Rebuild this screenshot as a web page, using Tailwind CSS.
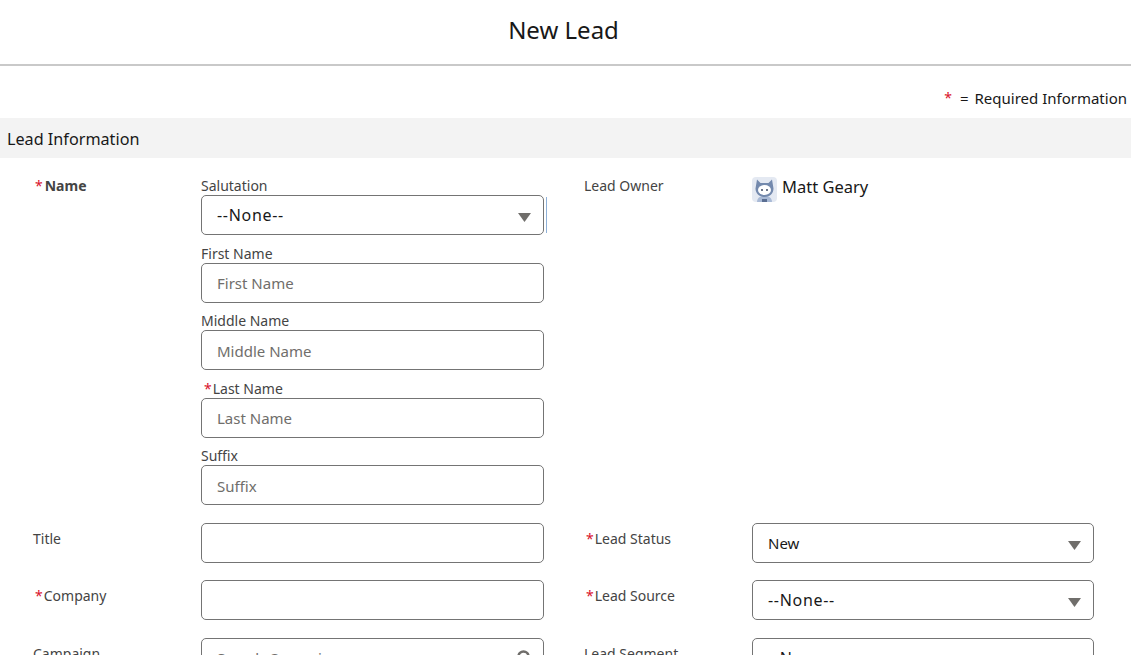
<!DOCTYPE html>
<html lang="en">
  <head>
    <meta charset="utf-8" />
    <title>New Lead</title>
    <script src="https://cdn.jsdelivr.net/npm/@tailwindcss/browser@4"></script>
  </head>
  <body class="bg-white font-['Noto_Sans',sans-serif] text-[#444444]">
    <div class="h-[655px] overflow-hidden">
      <!-- header -->
      <header class="h-[66px] border-b-2 border-[#c9c9c9] flex items-start justify-center pr-[4px]">
        <h1 class="text-[24px] leading-[60px] text-[#181818]">New Lead</h1>
      </header>
      <div class="h-[52px] flex items-end justify-end pr-[4px] pb-[9px] text-[15px] leading-[22px] text-[#181818]">
        <span class="text-[#d9122b] text-[14px] mr-[8px]">*</span><span class="mr-[6px]">=</span>Required Information
      </div>
      <div class="h-[40px] bg-[#f3f3f3] flex items-center pt-[2px] pl-[7px] text-[16.2px] text-[#181818]">Lead Information</div>

      <div class="pt-[9.5px]">
        <!-- name + owner -->
        <div class="flex mb-[18px]">
          <div class="w-[201px] pl-[35px] pt-[8px] text-[14px] leading-[19px] font-bold"><span class="text-[#d9122b] font-normal mr-[2px]">*</span>Name</div>
          <div class="w-[343px]">
            <div class="h-[27.5px] flex items-end text-[14px] leading-[19px]">Salutation</div>
            <div class="relative">
              <div class="h-[40px] border border-[#747474] rounded-[5px] flex items-center justify-between pl-[15px] pr-[12px] text-[16px] tracking-[0.7px] text-[#181818]">
                --None--
                <svg class="w-[13px] h-[9px] mt-[4px]" viewBox="0 0 13 9"><path d="M0 0h13L6.500 9z" fill="#706e6b"/></svg>
              </div>
              <span class="absolute -right-[3px] top-[2px] h-[36px] w-px bg-[#8fb1d8]"></span>
            </div>
            <div class="h-[27.5px] flex items-end text-[14px] leading-[19px]">First Name</div>
            <input class="block w-full h-[40px] border border-[#747474] rounded-[5px] px-[15px] text-[15px] placeholder:text-[#706e6b]" placeholder="First Name" />
            <div class="h-[27.5px] flex items-end text-[14px] leading-[19px]">Middle Name</div>
            <input class="block w-full h-[40px] border border-[#747474] rounded-[5px] pt-[2px] px-[15px] text-[15px] placeholder:text-[#706e6b]" placeholder="Middle Name" />
            <div class="h-[27.5px] flex items-end text-[14px] leading-[19px] pl-[3px]"><span class="text-[#d9122b] mr-[1px]">*</span>Last Name</div>
            <input class="block w-full h-[40px] border border-[#747474] rounded-[5px] px-[15px] text-[15px] placeholder:text-[#706e6b]" placeholder="Last Name" />
            <div class="h-[27.5px] flex items-end text-[14px] leading-[19px]">Suffix</div>
            <input class="block w-full h-[40px] border border-[#747474] rounded-[5px] pt-[2px] px-[15px] text-[15px] placeholder:text-[#706e6b]" placeholder="Suffix" />
          </div>
          <div class="w-[208px] pl-[40px] pt-[8px] text-[14px] leading-[19px]">Lead Owner</div>
          <div class="flex items-start gap-[5px] pt-[9.5px] text-[16.5px] leading-[20px] text-[#181818]">
            <svg class="w-[25px] h-[25px]" viewBox="0 0 25 25">
              <rect width="25" height="25" rx="4" fill="#e4e9f2"/>
              <path d="M5 25c0-4 3-6 7.500-6s7.500 2 7.500 6z" fill="#a9bad6"/>
              <path d="M5 2.500l3.500 3.500h8l3.500-3.500 1.500 9c0 5-4 8.500-9 8.500s-9-3.500-9-8.500z" fill="#7389ad"/>
              <ellipse cx="12.500" cy="13" rx="6.500" ry="5" fill="#fff"/>
              <circle cx="10" cy="13" r="1" fill="#3e4a63"/>
              <circle cx="15" cy="13" r="1" fill="#3e4a63"/>
              <path d="M10 22h5v3h-5z" fill="#5a6e92"/>
            </svg>
            <span>Matt Geary</span>
          </div>
        </div>

        <!-- title / status -->
        <div class="flex mb-[17px]">
          <div class="w-[201px] pl-[33px] pt-[6px] text-[14px] leading-[19px]">Title</div>
          <input class="block w-[343px] h-[40px] border border-[#747474] rounded-[5px] px-[15px] text-[15px]" />
          <div class="w-[208px] pl-[42px] pt-[6px] text-[14px] leading-[19px]"><span class="text-[#d9122b] mr-[1px]">*</span>Lead Status</div>
          <div class="w-[342px] h-[40px] border border-[#747474] rounded-[5px] flex items-center justify-between pl-[15px] pr-[12px] text-[15px] text-[#181818]">
            New
            <svg class="w-[13px] h-[9px] mt-[4px]" viewBox="0 0 13 9"><path d="M0 0h13L6.500 9z" fill="#706e6b"/></svg>
          </div>
        </div>

        <!-- company / source -->
        <div class="flex mb-[17.5px]">
          <div class="w-[201px] pl-[35px] pt-[6px] text-[14px] leading-[19px]"><span class="text-[#d9122b] mr-[1px]">*</span>Company</div>
          <input class="block w-[343px] h-[40px] border border-[#747474] rounded-[5px] px-[15px] text-[15px]" />
          <div class="w-[208px] pl-[42px] pt-[6px] text-[14px] leading-[19px]"><span class="text-[#d9122b] mr-[1px]">*</span>Lead Source</div>
          <div class="w-[342px] h-[40px] border border-[#747474] rounded-[5px] flex items-center justify-between pl-[15px] pr-[12px] text-[16px] tracking-[0.7px] text-[#181818]">
            --None--
            <svg class="w-[13px] h-[9px] mt-[4px]" viewBox="0 0 13 9"><path d="M0 0h13L6.500 9z" fill="#706e6b"/></svg>
          </div>
        </div>

        <!-- campaign / segment, cut off by the window -->
        <div class="flex">
          <div class="w-[201px] pl-[33px] pt-[6px] text-[14px] leading-[19px]">Campaign</div>
          <div class="relative w-[343px]">
            <input class="block w-full h-[40px] border border-[#747474] rounded-[5px] px-[15px] text-[15px] placeholder:text-[#706e6b]" placeholder="Search Campaigns..." />
            <svg class="absolute right-[12px] top-[12px] w-[15px] h-[15px]" viewBox="0 0 15 15" fill="none" stroke="#706e6b" stroke-width="2.500"><circle cx="6.500" cy="6.500" r="5"/><path d="M10 10l4 4"/></svg>
          </div>
          <div class="w-[208px] pl-[40px] pt-[6px] text-[14px] leading-[19px]">Lead Segment</div>
          <div class="w-[342px] h-[40px] border border-[#747474] rounded-[5px] flex items-center justify-between pl-[15px] pr-[12px] text-[16px] tracking-[0.7px] text-[#181818]">
            --None--
            <svg class="w-[13px] h-[9px] mt-[4px]" viewBox="0 0 13 9"><path d="M0 0h13L6.500 9z" fill="#706e6b"/></svg>
          </div>
        </div>
      </div>
    </div>
  </body>
</html>
